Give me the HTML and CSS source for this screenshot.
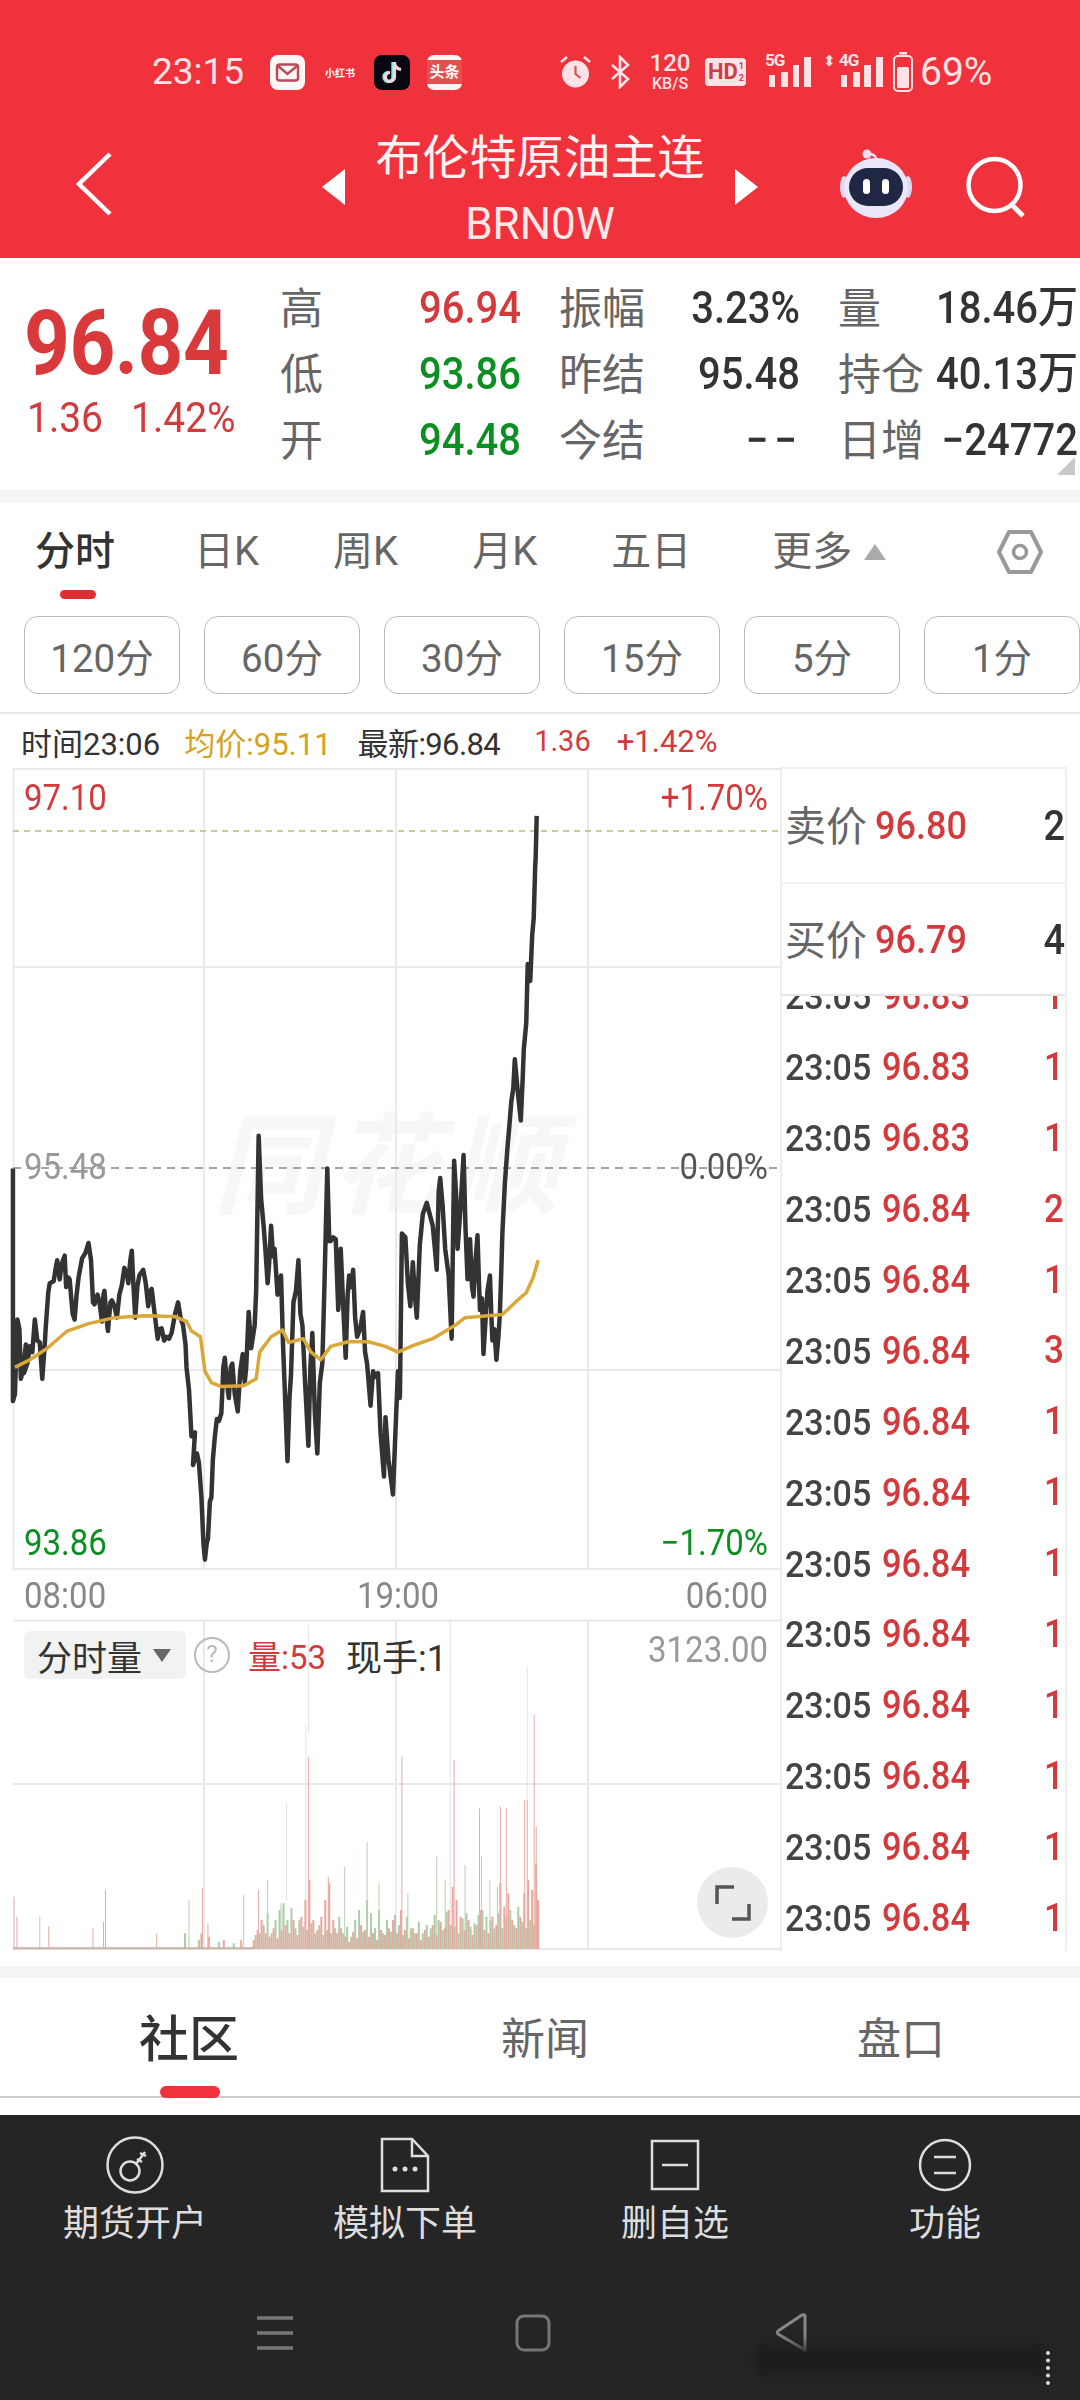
FILE: index.html
```html
<!DOCTYPE html>
<html lang="zh">
<head>
<meta charset="utf-8">
<title>布伦特原油主连</title>
<link rel="stylesheet" href="styles.css">
</head>
<body>
<div class="phone">
  <header class="header">
    <div class="status">
      <span class="time">23:15</span>
      <svg class="st-mail" width="35" height="35" viewBox="0 0 35 35"><rect width="35" height="35" rx="8" fill="#fff6f6"/><rect x="7" y="9.500" width="21" height="16" rx="2.500" fill="none" stroke="#b84a55" stroke-width="2.400"/><path d="M8 11l9.500 8 9.500-8" fill="none" stroke="#b84a55" stroke-width="2.400"/></svg>
      <span class="st-xhs">小红书</span>
      <svg class="st-tt" width="36" height="35" viewBox="0 0 36 35"><rect width="36" height="35" rx="8" fill="#07080f"/><path d="M19 7v15a4.500 4.500 0 1 1-4.500-4.500" fill="none" stroke="#7de8e8" stroke-width="3.400"/><path d="M20.500 7v15a4.500 4.500 0 1 1-4.500-4.500M20.500 8c.5 3.500 3 6 6.500 6.500" fill="none" stroke="#fbd3dc" stroke-width="3.200"/></svg>
      <span class="st-tou"><span class="st-tou-in">头条</span></span>
      <svg class="st-alarm" width="33" height="36" viewBox="0 0 33 36"><circle cx="16.500" cy="20" r="13.500" fill="#fde3e5"/><path d="M16.500 12v8l5 4" fill="none" stroke="#d8505a" stroke-width="2.200"/><path d="M2 8l6-5M31 8l-6-5" stroke="#fde3e5" stroke-width="2.600" fill="none"/></svg>
      <svg class="st-bt" width="20" height="34" viewBox="0 0 20 34"><path d="M2 10l16 14-8 8V2l8 8L2 24" fill="none" stroke="#fde3e5" stroke-width="2.600"/></svg>
      <span class="st-speed"><span class="st-speed-top">120</span><span class="st-speed-bot">KB/S</span></span>
      <span class="st-hd">HD<span class="st-hd-sm">1<br>2</span></span>
      <span class="st-sig st-sig-5"><span class="st-g">5G</span>
        <svg width="50" height="38" viewBox="0 0 50 38"><path d="M5 22h6v12H5zM17 19h7v15h-7zM29 12h6v22h-6zM40 4h7v30h-7z" fill="#fde3e5"/></svg>
      </span>
      <span class="st-sig st-sig-4"><span class="st-arrows">⬍</span><span class="st-g">4G</span>
        <svg width="44" height="38" viewBox="0 0 44 38"><path d="M2 22h6v12H2zM14 19h7v15h-7zM25 12h7v22h-7zM37 4h7v30h-7z" fill="#fde3e5"/></svg>
      </span>
      <svg class="st-bat" width="20" height="40" viewBox="0 0 20 40"><rect x="6" y="0" width="8" height="2.500" fill="#fde3e5"/><rect x="1" y="4" width="18" height="35" rx="4" fill="none" stroke="#fde3e5" stroke-width="2"/><rect x="4" y="15" width="12" height="21" rx="1.500" fill="#fde3e5"/></svg>
      <span class="st-pct">69%</span>
    </div>
    <div class="nav">
      <svg class="nav-back" width="36" height="64" viewBox="0 0 36 64"><path d="M34 2L3 32l31 30" fill="none" stroke="#fff" stroke-width="4.500"/></svg>
      <span class="tri tri-l"></span>
      <div class="title">
        <div class="title-cn">布伦特原油主连</div>
        <div class="title-code">BRN0W</div>
      </div>
      <span class="tri tri-r"></span>
      <svg class="robot" width="72" height="70" viewBox="0 0 72 70"><path d="M37 14c0-6-2-8-6-9" fill="none" stroke="#e6e0f5" stroke-width="2.500"/><circle cx="27" cy="5" r="4.500" fill="#eadff0"/><ellipse cx="4" cy="38" rx="4" ry="11" fill="#dcd8f2"/><ellipse cx="68" cy="38" rx="4" ry="11" fill="#dcd8f2"/><ellipse cx="36" cy="39" rx="32" ry="30" fill="#ebe7f8"/><rect x="9" y="19" width="54" height="38" rx="19" fill="#1f2744"/><rect x="23" y="30" width="7" height="15" rx="3.500" fill="#fff"/><rect x="42" y="30" width="7" height="15" rx="3.500" fill="#fff"/></svg>
      <svg class="search" width="60" height="62" viewBox="0 0 60 62"><circle cx="28.500" cy="29" r="26" fill="none" stroke="#fff" stroke-width="4.500"/><path d="M47 50l10 10" fill="none" stroke="#fff" stroke-width="5"/></svg>
    </div>
  </header>

  <section class="info">
    <div class="quote-main">
      <div class="q-big">96.84</div>
      <div class="q-sub"><span class="tall">1.36</span><span class="tall">1.42%</span></div>
    </div>
    <div class="stats">
      <div class="cell"><span class="lab">高</span><span class="val red">96.94</span></div>
      <div class="cell"><span class="lab">振幅</span><span class="val">3.23%</span></div>
      <div class="cell"><span class="lab">量</span><span class="val">18.46万</span></div>
      <div class="cell"><span class="lab">低</span><span class="val green">93.86</span></div>
      <div class="cell"><span class="lab">昨结</span><span class="val">95.48</span></div>
      <div class="cell"><span class="lab">持仓</span><span class="val">40.13万</span></div>
      <div class="cell"><span class="lab">开</span><span class="val green">94.48</span></div>
      <div class="cell"><span class="lab">今结</span><span class="val val-dash">−−</span></div>
      <div class="cell"><span class="lab">日增</span><span class="val">−24772</span></div>
    </div>
    <span class="corner"></span>
  </section>

  <nav class="tabs">
    <span class="tab tab-on">分时</span>
    <span class="tab">日K</span>
    <span class="tab">周K</span>
    <span class="tab">月K</span>
    <span class="tab">五日</span>
    <span class="tab tab-more">更多<span class="more-tri"></span></span>
    <svg class="hex" width="48" height="46" viewBox="0 0 48 46"><path d="M13 3h22l10 20-10 20H13L3 23z" fill="none" stroke="#999" stroke-width="4" stroke-linejoin="round"/><circle cx="24" cy="23" r="6.500" fill="none" stroke="#999" stroke-width="3.500"/></svg>
  </nav>

  <div class="periods">
    <span class="period">120分</span>
    <span class="period">60分</span>
    <span class="period">30分</span>
    <span class="period">15分</span>
    <span class="period">5分</span>
    <span class="period">1分</span>
  </div>

  <div class="crosshair">
    <span class="ch-1">时间23:06</span>
    <span class="ch-2">均价:95.11</span>
    <span class="ch-3">最新:96.84</span>
    <span class="ch-4">1.36</span>
    <span class="ch-5">+1.42%</span>
  </div>

  <main class="market">
    <div class="charts">
      <div class="price-chart">
        <div class="watermark">同花顺</div>
        <svg class="chart-svg" viewBox="0 0 767 802" preserveAspectRatio="none">
          <path class="grid" d="M191 0V802M383 0V802M575 0V802M0 199H767M0 602H767M0 1H767M0 801H767M.5 0V802"/>
          <path class="dash-top" d="M0 63H767"/>
          <path class="dash-mid" d="M0 400H767"/>
          <g transform="translate(-13 232) scale(.4974 .3827)">
            <polyline class="line-price" points="26,440 26,1048 30,1030 35,835 39,860 42,990 47,960 52,900 48,975 55,950 60,905 65,920 70,835 75,890 80,895 85,990 90,900 92,855 97,765 100,740 108,735 112,700 115,680 120,730 124,690 130,668 133,750 137,725 140,730 146,820 150,835 154,770 158,725 165,675 172,660 178,635 183,680 187,790 190,795 196,770 200,790 205,840 208,770 210,760 214,830 217,865 222,790 225,785 230,800 235,830 240,770 245,745 250,700 255,715 258,740 262,680 265,655 268,740 272,830 276,750 280,720 288,705 293,740 298,800 302,760 305,755 310,810 317,885 321,860 325,858 330,890 335,880 340,885 345,870 352,820 358,790 363,830 368,850 373,900 375,960 380,1020 385,1140 392,1130 388,1215 396,1185 400,1210 405,1300 409,1420 412,1462 416,1415 418,1410 422,1310 425,1300 428,1200 432,1140 436,1095 440,1100 445,1080 449,960 452,935 456,1000 460,1040 464,960 467,950 472,1030 478,1075 483,970 488,925 492,1000 495,960 500,815 505,910 512,850 515,760 520,355 525,520 530,590 534,660 538,740 541,690 545,590 549,670 552,650 558,770 565,720 569,900 572,1000 578,1205 582,1040 585,980 590,790 595,760 600,680 604,820 608,850 613,990 620,1165 624,960 628,870 633,1080 638,1185 643,1000 648,950 652,760 658,440 662,630 665,630 670,620 675,625 680,810 685,650 690,800 695,935 699,770 702,720 706,750 710,705 714,830 718,880 724,860 730,815 734,920 738,950 745,1060 750,970 756,985 760,975 765,1130 772,1245 775,1090 781,1200 790,1292 795,1130 800,970 804,1040 808,610 815,620 820,740 825,800 830,685 834,770 838,830 844,640 850,560 858,530 864,560 870,590 875,660 878,705 882,500 885,465 890,540 895,650 902,720 908,885 911,600 913,420 917,510 920,650 926,540 932,405 936,600 940,730 945,625 949,750 952,775 956,680 960,615 963,740 965,810 969,780 972,925 976,840 980,760 985,720 988,830 990,890 994,860 998,940 1002,880 1005,820 1008,700 1010,610 1015,480 1020,390 1024,330 1028,265 1032,230 1035,155 1041,240 1047,315 1051,200 1053,130 1058,60 1061,-94 1066,-50 1070,-170 1073,-214 1076,-350 1077,-374 1079,-481"/>
            <polyline class="line-avg" points="30,960 60,940 95,910 135,865 180,845 230,830 290,825 350,827 375,840 385,865 403,880 412,970 425,1000 445,1010 490,1008 515,990 522,920 545,880 568,862 580,895 610,885 625,920 645,940 665,905 700,893 740,893 775,905 800,920 830,903 870,885 915,850 935,830 1010,822 1040,785 1058,765 1072,725 1082,680"/>
          </g>
        </svg>
        <span class="pl pl-tl red">97.10</span>
        <span class="pl pl-tr red">+1.70%</span>
        <span class="pl pl-ml">95.48</span>
        <span class="pl pl-mr">0.00%</span>
        <span class="pl pl-bl green">93.86</span>
        <span class="pl pl-br green">−1.70%</span>
      </div>
      <div class="axis"><span>08:00</span><span class="axis-mid">19:00</span><span>06:00</span></div>
      <div class="vol-chart">
        <svg class="chart-svg" viewBox="0 0 767 330" preserveAspectRatio="none">
          <path class="grid" d="M191 0V330M383 0V330M575 0V330M0 164H767M0 .5H767M0 329H767"/>
          <g transform="translate(-13 -20) scale(.4974 .3333)">
            <path class="vol-thin" d="M905 60V1047M620 75V400M615 375V900M576 610V900M1060 200V600"/>
            <path class="vol-g" d="M514 1047V1005M522 1047V1000M530 1047V975M538 1047V940M546 1047V1000M554 1047V960M562 1047V930M570 1047V910M578 1047V960M586 1047V925M594 1047V985M602 1047V960M610 1047V980M618 1047V990M626 1047V970M634 1047V1000M642 1047V975M650 1047V1005M658 1047V990M666 1047V1000M674 1047V985M682 1047V950M690 1047V1000M698 1047V980M706 1047V1010M714 1047V960M722 1047V930M730 1047V995M738 1047V900M746 1047V940M754 1047V985M762 1047V930M770 1047V1000M778 1047V960M786 1047V995M794 1047V945M802 1047V975M810 1047V1005M818 1047V950M826 1047V985M834 1047V1000M842 1047V965M850 1047V1000M858 1047V975M866 1047V985M874 1047V945M882 1047V960M890 1047V990M898 1047V935M906 1047V975M914 1047V980M922 1047V1000M930 1047V955M938 1047V940M946 1047V980M954 1047V970M962 1047V945M970 1047V930M978 1047V950M986 1047V960M994 1047V985M1002 1047V940M1010 1047V985M1018 1047V950M1026 1047V930M1034 1047V975M1042 1047V920M1050 1047V965M1058 1047V985M1066 1047V960M1074 1047V975M372 1047V1000M400 1047V1020M440 1047V1025M470 1047V1030"/>
            <path class="vol-g-thin" d="M80 1047V950M380 1047V900M490 1047V885M538 1047V840M565 1047V910M693 1047V800M738 1047V725M762 1047V850M820 1047V880M878 1047V770M895 1047V840M935 1047V795M968 1047V770M985 1047V840M1000 1047V860"/>
            <path class="vol-r" d="M510 1047V1020M518 1047V990M526 1047V960M534 1047V1000M542 1047V1010M550 1047V985M558 1047V1015M566 1047V990M574 1047V975M582 1047V1000M590 1047V960M598 1047V1005M606 1047V950M614 1047V900M622 1047V840M630 1047V960M638 1047V990M646 1047V950M654 1047V900M662 1047V850M670 1047V960M678 1047V1000M686 1047V985M694 1047V1010M702 1047V1025M710 1047V995M718 1047V1015M726 1047V975M734 1047V990M742 1047V1010M750 1047V1000M758 1047V1020M766 1047V990M774 1047V1005M782 1047V985M790 1047V960M798 1047V1000M806 1047V930M814 1047V990M822 1047V1015M830 1047V985M838 1047V1000M846 1047V1020M854 1047V990M862 1047V1010M870 1047V975M878 1047V1005M886 1047V965M894 1047V985M902 1047V930M910 1047V860M918 1047V900M926 1047V950M934 1047V990M942 1047V960M950 1047V1005M958 1047V975M966 1047V930M974 1047V990M982 1047V1000M990 1047V950M998 1047V975M1006 1047V850M1014 1047V920M1022 1047V880M1030 1047V960M1038 1047V985M1046 1047V950M1054 1047V880M1062 1047V840M1070 1047V870M1078 1047V790M1082 1047V900M405 1047V1000M420 1047V1010M450 1047V1020M485 1047V1020"/>
            <path class="vol-r-thin" d="M28 1047V890M34 1047V950M98 1047V980M187 1047V985M208 1047V965M212 1047V870M315 1047V1000M407 1047V865M418 1047V970M520 1047V870M620 1047V470M660 1047V830M808 1047V470M913 1047V480M964 1047V625M1006 1047V620M1018 1047V625M1055 1047V600M1060 1047V600M1074 1047V345M1078 1047V680"/>
            <path class="vol-base" d="M26 1045H510"/>
          </g>
        </svg>
        <div class="vol-head">
          <span class="vol-chip">分时量<span class="chip-tri"></span></span>
          <span class="vol-help">?</span>
          <span class="vol-now red">量:53</span>
          <span class="vol-hand">现手:1</span>
        </div>
        <span class="vol-max">3123.00</span>
        <button class="full" type="button" aria-label="全屏">
          <svg width="36" height="36" viewBox="0 0 36 36"><path d="M2 19V2h17M34 19v15H17" fill="none" stroke="#555" stroke-width="3.500"/></svg>
        </button>
      </div>
    </div>
    <aside class="side">
      <div class="bidask">
        <div class="ba-row"><span class="ba-lab">卖价</span><span class="ba-price">96.80</span><span class="ba-qty">2</span></div>
        <div class="ba-row"><span class="ba-lab">买价</span><span class="ba-price">96.79</span><span class="ba-qty">4</span></div>
      </div>
      <div class="ticks">
        <div class="tick tick-first"><span class="t-time">23:05</span><span class="t-price">96.83</span><span class="t-qty">1</span></div>
        <div class="tick"><span class="t-time">23:05</span><span class="t-price">96.83</span><span class="t-qty">1</span></div>
        <div class="tick"><span class="t-time">23:05</span><span class="t-price">96.83</span><span class="t-qty">1</span></div>
        <div class="tick"><span class="t-time">23:05</span><span class="t-price">96.84</span><span class="t-qty">2</span></div>
        <div class="tick"><span class="t-time">23:05</span><span class="t-price">96.84</span><span class="t-qty">1</span></div>
        <div class="tick"><span class="t-time">23:05</span><span class="t-price">96.84</span><span class="t-qty">3</span></div>
        <div class="tick"><span class="t-time">23:05</span><span class="t-price">96.84</span><span class="t-qty">1</span></div>
        <div class="tick"><span class="t-time">23:05</span><span class="t-price">96.84</span><span class="t-qty">1</span></div>
        <div class="tick"><span class="t-time">23:05</span><span class="t-price">96.84</span><span class="t-qty">1</span></div>
        <div class="tick"><span class="t-time">23:05</span><span class="t-price">96.84</span><span class="t-qty">1</span></div>
        <div class="tick"><span class="t-time">23:05</span><span class="t-price">96.84</span><span class="t-qty">1</span></div>
        <div class="tick"><span class="t-time">23:05</span><span class="t-price">96.84</span><span class="t-qty">1</span></div>
        <div class="tick"><span class="t-time">23:05</span><span class="t-price">96.84</span><span class="t-qty">1</span></div>
        <div class="tick"><span class="t-time">23:05</span><span class="t-price">96.84</span><span class="t-qty">1</span></div>
      </div>
    </aside>
  </main>

  <div class="sub-tabs">
    <span class="sub-tab sub-on">社区</span>
    <span class="sub-tab">新闻</span>
    <span class="sub-tab">盘口</span>
  </div>

  <footer class="dock">
    <div class="actions">
      <div class="action">
        <svg width="60" height="60" viewBox="0 0 60 60"><circle cx="30" cy="30" r="27.500" fill="none" stroke="#ddd" stroke-width="2.500"/><circle cx="25" cy="36" r="9.500" fill="none" stroke="#ddd" stroke-width="2.500"/><path d="M31 29l9-12M35 18l6 3M32 24l5 3" fill="none" stroke="#ddd" stroke-width="2.500"/></svg>
        <span class="action-lab">期货开户</span>
      </div>
      <div class="action">
        <svg width="60" height="60" viewBox="0 0 60 60"><path d="M7 4h30l16 17v35H7z" fill="none" stroke="#ddd" stroke-width="2.500"/><path d="M37 4v17h16" fill="none" stroke="#ddd" stroke-width="2.500"/><circle cx="20" cy="34" r="2.500" fill="#ddd"/><circle cx="30" cy="34" r="2.500" fill="#ddd"/><circle cx="40" cy="34" r="2.500" fill="#ddd"/></svg>
        <span class="action-lab">模拟下单</span>
      </div>
      <div class="action">
        <svg width="60" height="60" viewBox="0 0 60 60"><rect x="7" y="6" width="46" height="48" fill="none" stroke="#ddd" stroke-width="2.500"/><path d="M17 30h26" stroke="#ddd" stroke-width="2.500"/></svg>
        <span class="action-lab">删自选</span>
      </div>
      <div class="action">
        <svg width="60" height="60" viewBox="0 0 60 60"><circle cx="30" cy="30" r="25" fill="none" stroke="#ddd" stroke-width="2.500"/><path d="M19 22h22M19 38h22" stroke="#ddd" stroke-width="2.500"/></svg>
        <span class="action-lab">功能</span>
      </div>
    </div>
    <div class="sysnav">
      <svg width="36" height="36" viewBox="0 0 36 36"><path d="M0 3h36M0 18h36M0 33h36" stroke="#777" stroke-width="3.500"/></svg>
      <svg width="36" height="38" viewBox="0 0 36 38"><rect x="2" y="2" width="32" height="34" rx="7" fill="none" stroke="#777" stroke-width="3"/></svg>
      <svg width="36" height="40" viewBox="0 0 36 40"><path d="M32 3v34L5 21a2 2 0 0 1 0-3L29 2a2 2 0 0 1 3 1z" fill="none" stroke="#888" stroke-width="3"/></svg>
    </div>
    <span class="smudge"></span>
    <span class="dots"></span>
  </footer>
</div>
</body>
</html>
```

FILE: styles.css
```css
* { box-sizing: border-box; }
html, body { margin: 0; padding: 0; background: #fff; }
body { font-family: Roboto, "Noto Sans CJK SC", sans-serif; }
.phone { width: 1080px; height: 2400px; display: flex; flex-direction: column; overflow: hidden; position: relative; background: #fff; }
.red { color: #d23a3c; }
.green { color: #0c8f22; }

/* DIN-like digits in the original run taller than Roboto */
.tall, .val, .pl, .t-price, .t-time, .t-qty, .ba-price, .ba-qty, .axis span, .vol-max { transform: scaleY(1.1); }

/* header */
.header { height: 258px; background: #f0323c; flex: none; color: #fff; padding-top: 52px; }
.status { height: 40px; display: flex; align-items: center; padding-left: 152px; color: #fde3e5; }
.time { font-size: 37px; width: 96px; line-height: 40px; white-space: nowrap; }
.st-mail { margin-left: 22px; flex: none; }
.st-xhs { width: 30px; margin-left: 20px; font-size: 10px; font-weight: 700; white-space: nowrap; color: #fff; }
.st-tt { margin-left: 19px; flex: none; }
.st-tou { margin-left: 17px; width: 35px; height: 35px; background: #fff6f6; border-radius: 7px; display: flex; align-items: center; flex: none; }
.st-tou-in { width: 35px; height: 24px; background: #e2504f; color: #fff; font-size: 15px; line-height: 24px; text-align: center; font-weight: 700; white-space: nowrap; }
.st-alarm { margin-left: 97px; flex: none; }
.st-bt { margin-left: 18px; flex: none; }
.st-speed { margin-left: 18px; width: 44px; display: flex; flex-direction: column; align-items: center; font-weight: 500; }
.st-speed-top { font-size: 24px; line-height: 24px; }
.st-speed-bot { font-size: 16px; line-height: 18px; white-space: nowrap; }
.st-hd { margin-left: 13px; width: 41px; height: 28px; background: #fde3e5; border-radius: 4px; color: #d23a48; font-size: 22px; line-height: 28px; font-weight: 700; display: flex; padding-left: 3px; }
.st-hd-sm { font-size: 9px; line-height: 12px; padding-top: 2px; padding-left: 1px; text-align: center; }
.st-sig { display: flex; position: relative; align-items: flex-end; height: 38px; }
.st-sig-5 { margin-left: 18px; width: 50px; }
.st-sig-4 { margin-left: 9px; width: 60px; justify-content: flex-end; }
.st-sig svg { flex: none; }
.st-g { position: absolute; top: -2px; font-size: 17px; line-height: 18px; font-weight: 700; letter-spacing: -1px; }
.st-sig-5 .st-g { left: 1px; }
.st-sig-4 .st-g { left: 16px; }
.st-arrows { position: absolute; top: -1px; left: 0; font-size: 15px; line-height: 18px; font-family: "DejaVu Sans", sans-serif; }
.st-bat { margin-left: 10px; flex: none; }
.st-pct { margin-left: 7px; font-size: 39px; line-height: 40px; white-space: nowrap; }

.nav { display: flex; align-items: center; padding-top: 36px; padding-bottom: 18px; padding-left: 76px; height: 166px; }
.nav-back { flex: none; }
.tri { width: 0; height: 0; border-top: 18px solid transparent; border-bottom: 18px solid transparent; flex: none; margin-top: 6px; }
.tri-l { margin-left: 210px; border-right: 23px solid #fff; }
.tri-r { border-left: 23px solid #fff; }
.title { width: 390px; text-align: center; height: 130px; margin-bottom: -18px; flex: none; }
.title-cn { font-size: 47px; line-height: 60px; white-space: nowrap; color: #fff2f2; }
.title-code { font-size: 44px; line-height: 72px; height: 68px; color: #fde8e8; }
.robot { margin-left: 82px; flex: none; }
.search { margin-left: 54px; flex: none; margin-top: 6px; }

/* info */
.info { height: 232px; flex: none; display: flex; position: relative; }
.quote-main { width: 280px; padding-left: 24px; padding-top: 45px; flex: none; }
.q-big { font-size: 80px; line-height: 80px; font-weight: 700; color: #d9393a; letter-spacing: -.5px; transform: scaleY(1.14); transform-origin: left center; }
.q-sub { display: flex; gap: 28px; font-size: 39px; line-height: 44px; color: #d23a3c; margin-top: 13px; padding-left: 3px; }
.stats { display: grid; grid-template-columns: 241px 241px 240px; grid-auto-rows: 66px; column-gap: 38px; padding-top: 18px; }
.cell { display: flex; justify-content: space-between; align-items: center; white-space: nowrap; }
.lab { font-size: 43px; color: #666; line-height: 66px; }
.val { font-size: 40px; font-weight: 500; color: #333; line-height: 66px; }
.val.red { color: #d23a3c; }
.val.green { color: #0c8f22; }
.val-dash { letter-spacing: 6px; margin-right: -3px; }
.corner { position: absolute; right: 5px; bottom: 15px; width: 0; height: 0; border-left: 18px solid transparent; border-bottom: 18px solid #c8c8c8; }

/* tabs */
.tabs { height: 126px; flex: none; border-top: 13px solid #f5f5f5; display: flex; align-items: center; padding-left: 35px; gap: 74px; padding-bottom: 15px; position: relative; }
.tab { font-size: 40px; line-height: 50px; color: #666; white-space: nowrap; }
.tab-on { color: #333; margin-right: 5px; position: relative; font-weight: 500; }
.tab-on::after { content: ""; position: absolute; left: 25px; bottom: -22px; width: 36px; height: 9px; border-radius: 5px; background: #dd2f33; }
.tab-more { margin-left: 7px; display: flex; align-items: center; }
.more-tri { width: 0; height: 0; border-left: 11px solid transparent; border-right: 11px solid transparent; border-bottom: 16px solid #aaa; margin-left: 12px; }
.hex { position: absolute; left: 996px; top: 26px; }

.periods { height: 98px; flex: none; display: flex; gap: 24px; padding-left: 24px; border-bottom: 2px solid #e8e8e8; }
.period { width: 156px; height: 78px; flex: none; border: 1.500px solid #bbb; border-radius: 14px; font-size: 38.500px; color: #666; display: flex; align-items: center; justify-content: center; white-space: nowrap; }

.crosshair { height: 54px; flex: none; padding-left: 21px; font-size: 31px; display: flex; align-items: center; white-space: nowrap; color: #333; }
.ch-2 { color: #d6a21e; margin-left: 24px; }
.ch-3 { margin-left: 26px; letter-spacing: -.6px; }
.ch-4 { color: #d23a3c; margin-left: 34px; font-size: 29px; }
.ch-5 { color: #d23a3c; margin-left: 26px; }

/* market */
.market { height: 1198px; flex: none; display: flex; }
.charts { width: 780px; flex: none; padding-left: 13px; }
.price-chart { height: 802px; width: 767px; position: relative; }
.chart-svg { position: absolute; left: 0; top: 0; width: 100%; height: 100%; overflow: visible; }
.grid { fill: none; stroke: #e9e9e9; stroke-width: 2; }
.dash-top { stroke: #b9b878; stroke-width: 1.500; stroke-dasharray: 6 5; }
.dash-mid { stroke: #888; stroke-width: 1.500; stroke-dasharray: 8 6; }
.line-price { fill: none; stroke: #333; stroke-width: 4.500; vector-effect: non-scaling-stroke; stroke-linejoin: round; }
.line-avg { fill: none; stroke: #d9a838; stroke-width: 3.500; vector-effect: non-scaling-stroke; stroke-linejoin: round; }
.watermark { position: absolute; left: 200px; top: 335px; font-size: 110px; line-height: 130px; font-weight: 700; font-style: italic; color: #f7f7f7; white-space: nowrap; letter-spacing: 8px; }
.pl { position: absolute; font-size: 33px; line-height: 40px; white-space: nowrap; }
.pl-tl { left: 11px; top: 10px; }
.pl-tr { right: 12px; top: 10px; }
.pl-ml { left: 11px; top: 379px; color: #999; }
.pl-mr { right: 12px; top: 379px; color: #555; }
.pl-bl { left: 11px; top: 755px; }
.pl-br { right: 12px; top: 755px; }
.axis { height: 50px; display: flex; justify-content: space-between; align-items: center; font-size: 33px; color: #888; padding: 0 12px 0 11px; width: 767px; }
.axis-mid { margin-left: 4px; }
.vol-chart { height: 330px; width: 767px; position: relative; }
.vol-thin { stroke: #e2e2e2; stroke-width: 1; fill: none; vector-effect: non-scaling-stroke; }
.vol-g { stroke: #adcba6; stroke-width: 2; fill: none; vector-effect: non-scaling-stroke; }
.vol-r { stroke: #e9a79f; stroke-width: 2; fill: none; vector-effect: non-scaling-stroke; }
.vol-g-thin { stroke: #b7d1b1; stroke-width: 1; fill: none; vector-effect: non-scaling-stroke; }
.vol-r-thin { stroke: #e9aaa3; stroke-width: 1; fill: none; vector-effect: non-scaling-stroke; }
.vol-base { stroke: #c9b2a8; stroke-width: 2; fill: none; vector-effect: non-scaling-stroke; }
.vol-head { position: absolute; left: 11px; top: 11px; display: flex; align-items: center; height: 48px; white-space: nowrap; }
.vol-chip { width: 162px; height: 48px; background: #f2f2f2; border-radius: 6px; font-size: 35px; color: #333; display: flex; align-items: center; padding-left: 13px; }
.chip-tri { width: 0; height: 0; border-left: 9px solid transparent; border-right: 9px solid transparent; border-top: 13px solid #666; margin-left: 11px; }
.vol-help { width: 36px; height: 36px; border: 2.500px solid #bbb; border-radius: 50%; margin-left: 8px; color: #bbb; font-size: 24px; line-height: 31px; text-align: center; }
.vol-now { font-size: 33px; margin-left: 18px; }
.vol-hand { font-size: 36px; margin-left: 20px; color: #333; }
.vol-max { position: absolute; right: 12px; top: 10px; font-size: 33px; line-height: 40px; color: #999; }
.full { position: absolute; left: 684px; top: 247px; width: 71px; height: 71px; border: 0; padding: 0; border-radius: 50%; background: #ebebeb; display: flex; align-items: center; justify-content: center; }

.side { width: 287px; flex: none; border-left: 2px solid #eee; border-right: 2px solid #eee; border-top: 2px solid #eee; display: flex; flex-direction: column; margin-top: -1px; margin-bottom: 15px; }
.bidask { height: 227px; flex: none; position: relative; background: #fff; border-bottom: 2px solid #e6e6e6; }
.ba-row { height: 113px; display: flex; align-items: center; padding-left: 3px; white-space: nowrap; }
.ba-row + .ba-row { border-top: 2px solid #f2f2f2; }
.ba-lab { font-size: 41px; color: #666; width: 90px; flex: none; margin-bottom: 6px; }
.ba-price { font-size: 36px; color: #d23a3c; font-weight: 500; }
.ba-qty { font-size: 38px; color: #333; margin-left: auto; font-weight: 500; }
.ticks { flex: 1; overflow: hidden; }
.tick { height: 70.900px; display: flex; align-items: center; padding-left: 3px; padding-right: 1px; white-space: nowrap; }
.tick-first { margin-top: -35px; }
.t-time { font-size: 34px; color: #444; width: 97px; flex: none; font-weight: 500; }
.t-price { font-size: 34.500px; color: #d23a3c; font-weight: 500; }
.t-qty { font-size: 35px; color: #d23a3c; margin-left: auto; font-weight: 500; }

/* sub tabs */
.sub-tabs { height: 149px; flex: none; border-top: 12px solid #f5f5f5; display: grid; grid-template-columns: repeat(3, 356px); padding-left: 11px; position: relative; }
.sub-tabs::after { content: ""; position: absolute; left: 0; right: 0; bottom: 17px; height: 2px; background: #ccc; }
.sub-tab { font-size: 44px; color: #666; text-align: center; line-height: 124px; position: relative; height: 137px; }
.sub-on { font-size: 50px; color: #333; font-weight: 500; }
.sub-on::after { content: ""; position: absolute; left: 149px; top: 108px; width: 60px; height: 12px; border-radius: 6px; background: #f0323c; z-index: 1; }

/* dock */
.dock { flex: 1; background: #252525; position: relative; }
.actions { display: grid; grid-template-columns: repeat(4, 270px); padding-top: 20px; }
.action { display: flex; flex-direction: column; align-items: center; }
.action-lab { font-size: 36px; line-height: 50px; margin-top: 4px; color: #ddd; white-space: nowrap; }
.sysnav { display: flex; justify-content: center; gap: 222px; margin-top: 64px; padding-right: 14px; align-items: center; }
.smudge { position: absolute; left: 755px; top: 230px; width: 290px; height: 30px; background: #1b1b1b; filter: blur(7px); opacity: .85; }
.dots { position: absolute; left: 1046px; top: 236px; width: 5px; height: 34px; border-left: 4px dotted #ddd; }
```
